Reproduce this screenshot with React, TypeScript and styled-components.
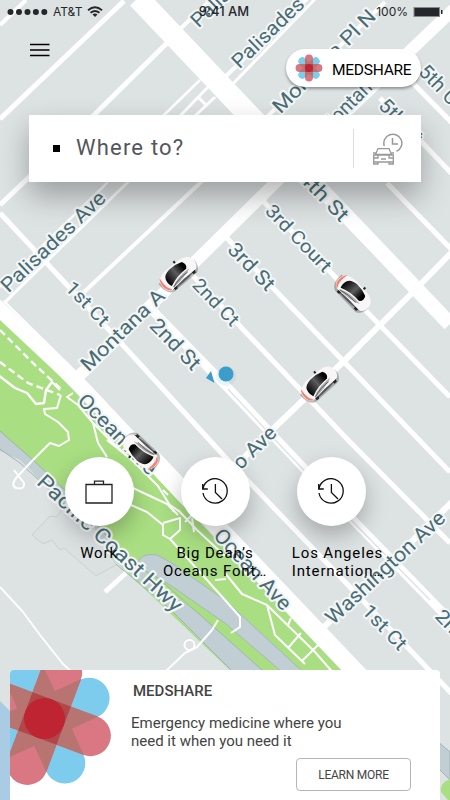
import React from "react";
import styled, { createGlobalStyle } from "styled-components";

const GlobalStyle = createGlobalStyle`
  *, *::before, *::after { box-sizing: border-box; }
  body { margin: 0; background: #dde2e2; font-family: Roboto, "Liberation Sans", sans-serif; }
  p, h2 { margin: 0; }
  button { font: inherit; color: inherit; border: 0; padding: 0; background: none; }
`;

const Screen = styled.main`
  position: relative;
  z-index: 0;
  width: 450px;
  height: 800px;
  overflow: hidden;
  display: flex;
  flex-direction: column;
  color: #000;
`;

const MapCanvas = styled.svg`
  position: absolute;
  inset: 0;
  z-index: -1;
`;

const StatusBar = styled.header`
  display: grid;
  grid-template-columns: 1fr auto 1fr;
  align-items: center;
  height: 23px;
  padding: 0 7px 0 7px;
  font: 400 12px/23px Inter, Roboto, sans-serif;
  color: #25282b;
`;

const StatusGroup = styled.div<{ $end?: boolean }>`
  display: flex;
  align-items: center;
  gap: 5px;
  justify-content: ${(p) => (p.$end ? "flex-end" : "flex-start")};
`;

const Clock = styled.span`
  font-weight: 500;
  font-size: 13px;
  padding-right: 2px;
`;

const TopRow = styled.div`
  display: flex;
  justify-content: space-between;
  padding: 20px 29px 0 30px;
  margin-top: 6px;
`;

const MenuButton = styled.button`
  display: block;
  width: 20px;
  height: 14px;
  margin-top: -7px;
`;

const BrandChip = styled.div`
  display: flex;
  align-items: center;
  gap: 9px;
  width: 135px;
  height: 38px;
  padding-left: 9px;
  border-radius: 19px;
  background: #fff;
  box-shadow: 0 2px 3px rgba(0, 0, 0, 0.35);
  font-size: 15.5px;
  line-height: 20px;
  white-space: nowrap;
`;

const ChipName = styled.span`
  margin-top: 3px;
  letter-spacing: -0.25px;
`;

const SearchBar = styled.div`
  display: flex;
  align-items: center;
  width: 392px;
  height: 67px;
  margin: 28px 0 0 29px;
  padding-left: 24px;
  background: #fff;
  box-shadow: 0 14px 30px rgba(0, 0, 0, 0.3);
`;

const Marker = styled.span`
  width: 7px;
  height: 7px;
  background: #000;
  margin-right: 16px;
`;

const SearchPrompt = styled.span`
  flex: 1;
  font-size: 22px;
  line-height: 26px;
  letter-spacing: 1.2px;
  color: #54565c;
  margin-top: -1px;
`;

const ScheduleButton = styled.button`
  display: flex;
  align-items: center;
  height: 39px;
  width: 68px;
  padding-left: 18px;
  border-left: 1px solid #dcdcdc;
`;

const Shortcuts = styled.nav`
  display: grid;
  grid-template-columns: repeat(3, 116px);
  margin: 275px 0 0 41px;
`;

const Shortcut = styled.div`
  display: flex;
  flex-direction: column;
  align-items: center;
`;

const ShortcutDisc = styled.button`
  display: flex;
  align-items: center;
  justify-content: center;
  width: 69px;
  height: 69px;
  border-radius: 50%;
  background: #fff;
  box-shadow: 0 10px 22px rgba(0, 0, 0, 0.25);
`;

const ShortcutLabel = styled.span<{ $left?: boolean }>`
  margin-top: 18px;
  margin-left: ${(p) => (p.$left ? "14px" : "0")};
  font-size: 15px;
  line-height: 18px;
  letter-spacing: 0.85px;
  white-space: pre;
  text-align: ${(p) => (p.$left ? "left" : "center")};
`;

const PromoCard = styled.section`
  display: flex;
  width: 430px;
  height: 130px;
  margin: auto 10px 0;
  border-radius: 4px 4px 0 0;
  background: #fff;
  overflow: hidden;
  color: #444;
`;

const PromoBody = styled.div`
  flex: 1;
  display: flex;
  flex-direction: column;
  padding: 12px 29px 9px 17px;
`;

const PromoTitle = styled.h2`
  font-size: 15px;
  font-weight: 500;
  line-height: 18px;
  padding-left: 2px;
`;

const PromoText = styled.p`
  margin-top: 14px;
  font-size: 15px;
  line-height: 18px;
  white-space: pre;
`;

const LearnMore = styled.button`
  align-self: flex-end;
  margin-top: auto;
  width: 115px;
  height: 33px;
  border: 1px solid #b5b5b5;
  border-radius: 4px;
  font-size: 12px;
  letter-spacing: -0.25px;
  text-align: center;
`;

type RoadProps = { d: string; w: number; color?: string; dash?: string };
const Road = ({ d, w, color = "#fff", dash }: RoadProps) => (
  <path d={d} stroke={color} strokeWidth={w} strokeDasharray={dash} fill="none" strokeLinejoin="round" />
);

type Street = { x: number; y: number; a: number; len: number; name: string; size?: number };
const streets: Street[] = [
  { x: 197, y: 27, a: -44, len: 92, name: "Palisades" },
  { x: 238, y: 68, a: -44, len: 92, name: "Palisades" },
  { x: 279, y: 113, a: -45, len: 137, name: "Montana Pl N" },
  { x: 325, y: 134, a: -45, len: 77, name: "Montana" },
  { x: 419, y: 71, a: 46, len: 54, name: "5th Ct" },
  { x: 379, y: 105, a: 46, len: 54, name: "5th St" },
  { x: 299, y: 177, a: 46, len: 62, name: "4th St", size: 20 },
  { x: 265, y: 211, a: 46, len: 86, name: "3rd Court", size: 18.5 },
  { x: 228, y: 249, a: 46, len: 58, name: "3rd St", size: 20 },
  { x: 7, y: 292, a: -43.5, len: 136, name: "Palisades Ave" },
  { x: 192, y: 285, a: 46, len: 58, name: "2nd Ct", size: 18.5 },
  { x: 150, y: 325, a: 46, len: 63, name: "2nd St", size: 20.5 },
  { x: 65, y: 288, a: 46, len: 54, name: "1st Ct", size: 18.5 },
  { x: 87, y: 371, a: -44, len: 108, name: "Montana A" },
  { x: 78, y: 400, a: 46, len: 104, name: "Ocean Ave" },
  { x: 239, y: 469, a: -44, len: 52, name: "o Ave" },
  { x: 37, y: 482, a: 43, len: 190, name: "Pacific Coast Hwy", size: 21 },
  { x: 214, y: 535, a: 47, len: 103, name: "Ocean Ave", size: 20.5 },
  { x: 332, y: 624, a: -43, len: 155, name: "Washington Ave", size: 20.5 },
  { x: 362, y: 611, a: 46, len: 55, name: "1st Ct", size: 19 },
  { x: 435, y: 616, a: 46, len: 62, name: "2nd St", size: 19 },
  { x: 350, y: 679, a: 46, len: 100, name: "Ocean Ave", size: 20 },
];

const Car = ({ x, y, a }: { x: number; y: number; a: number }) => (
  <g transform={`translate(${x} ${y}) rotate(${a})`}>
    <path d="M-22-4Q-23 9-15 12L15 12Q21 9 21 1L8-4Z" fill="#555" opacity=".4" />
    <path d="M-19-6Q-14-10-6-10L9-9.500Q17-9 20-3Q22 4 17 8Q8 10.500-7 10Q-17 11-20 5Q-22-2-19-6Z" fill="#f8f6f6" />
    <path d="M-18.500-6.500Q-22 0-19 6Q-17.500 8.500-15 9L-17.500 4Q-18.500-1-17.500-7.500Z" fill="#f4826f" />
    <path d="M-15 9.500Q0 7.500 16 8.500Q7 11-8 10.500Z" fill="#55575a" />
    <path d="M-13.500-3Q-12-7.500-4-8.300Q4-8.500 10-6Q13-1 9 2Q-3 1.500-13 6Q-15 2-13.500-3Z" fill="url(#glass)" />
    <path d="M-12.500 7.500Q-4 2.500 12 3.500Q4 7.500-12.500 8.500Z" fill="#aaaaab" />
    <path d="M-12 8Q-3 4.500 8 5.500" stroke="#555" strokeWidth=".8" fill="none" />
    <path d="M3-9.500l0-2.500 2 0 0 2.500zM-13 9h4l-1 2.500h-3zM11 8.500h4l-1 2.500h-3z" fill="#252525" />
  </g>
);

const CityMap = () => (
  <MapCanvas width="450" height="800" viewBox="0 0 450 800" aria-hidden="true">
    <defs>
      <linearGradient id="glass">
        <stop offset="0" stopColor="#050505" />
        <stop offset=".5" stopColor="#5c5c5c" />
        <stop offset=".85" stopColor="#050505" />
      </linearGradient>
    </defs>
    <rect width="450" height="800" fill="#dde2e2" />
    <path d="M0 701L12 713V800H0Z" fill="#a9cbe4" />
    <path d="M0 314L343 672H232L110 556L0 437Z" fill="#a9de82" />
    <path d="M0 432L34 461L66 491L110 540L137 566L200 615L262 670V684H243L225 664L170 609L105 550L61 500L20 460L0 451Z" fill="#c1cfd4" />
    <path d="M0 431L34 461L66 491L110 540L165 584L225 637L262 670M0 449L20 463L61 500L105 555L170 609L225 664L240 679" fill="none" stroke="#a3b2ba" strokeWidth="1" />
    <path d="M137 566Q139 552 157 555L170 562L225 600L303 672H282L225 623L167 583Z" fill="#c1cfd4" stroke="#a6b7bd" strokeWidth="1" />
    <path d="M436 740L450 752V780L436 766Z" fill="#c1cfd4" stroke="#a3b2ba" />
    <path d="M450 779Q439 783 441 792L448 800H450Z" fill="#a9de82" />

    <path d="M32 535L50 516L57 517L65 504L85 520L96 530L111 555L116 565L96 576L64 548L60 550L52 540L43 544Z" fill="#dbe0e0" stroke="#cbd0d0" />

    <Road w={4} d="M0 25L26 0" />
    <Road w={5} d="M0 119L124 1" />
    <Road w={5} d="M0 205L92 117L167 43" />
    <Road w={2.5} d="M0 287L105 185L163 116L200 80" />
    <Road w={3} d="M4 303L127 183L180 116L208 87M195 116L215 97M199 98L207 106" />
    <Road w={4} d="M180 29L215 -4M225 77L308 -2" />
    <Road w={3} d="M225 92L316 -2" />
    <Road w={4} d="M83 293L200 183L272 112L385 2" />
    <Road w={22} d="M138 -2L247 113L310 178" />
    <Road w={15} d="M300 167L450 324" />
    <Road w={12} d="M75 380L273 185L345 113L455 8" />
    <Road w={6} d="M195 506L272 430L345 360L413 292L452 252" />
    <Road w={5} d="M387 183L452 250M400 70L455 126M380 98L452 174" />
    <Road w={5} d="M262 200L340 282L368 313L450 397" />
    <Road w={5} d="M225 236L273 288L450 472" />
    <Road w={5} d="M183 265L237 323L348 440L450 543" />
    <Road w={9} d="M150 308L228 388L280 443L353 520L452 622" />
    <Road w={1.3} color="#dce2e2" d="M228 389L280 445L353 522L430 600" />
    <Road w={5} d="M0 213L67 285L110 331L225 457L348 585L452 694" />
    <Road w={6} d="M322 629L452 502" />
    <Road w={15} d="M-5 305L75 380L190 502" />
    <Road w={18} d="M150 456L353 669L374 690" />
    <Road w={2} d="M4 301L72 368M6 302L28 280" />

    <Road w={2.4} dash="7 4" d="M0 330L35 365L62 390" />
    <Road w={2.4} dash="7 4" d="M0 362L28 383L60 395" />
    <Road w={2.4} d="M-2 375L15 388L27 393L36 404L44 403L46 390L52 382L60 390" />
    <Road w={2} d="M61 395L57 408L44 409L45 414L58 422L68 432L69 440L59 446L50 443L33 460L17 477Q10 485 16 488Q25 490 24 483L14 470" />
    <Road w={2} d="M73 393L67 397L78 405L93 423L113 443L135 463L158 486L174 512M93 423L98 443L107 457M107 440L132 460" />
    <Road w={2} d="M133 488L167 504L178 515M131 505L147 512L163 525V535L170 539L180 530V518L163 523M178 510L197 530L225 556M170 539L225 600L240 617V627L231 633M225 573L242 594L267 605L315 652L335 675M267 605L275 635L305 664M288 648L301 633M302 661L318 645M192 518L194 532M185 522L192 515M215 580L226 579M241 565L297 617" />
    <Road w={2} d="M163 490L168 495M180 512L170 505M288 625L291 618" />
    <Road w={2} d="M218 620L212 630L197 647L185 653L165 672M0 587L23 612L40 635L63 664L72 672" />
    <circle cx="189.500" cy="645" r="5" stroke="#fff" strokeWidth="2" fill="none" />
    <Road w={5} d="M105 592L126 573" />

    {streets.map((s, i) => (
      <text
        key={i}
        y="-5"
        transform={`translate(${s.x} ${s.y}) rotate(${s.a})`}
        fontFamily="Roboto, sans-serif"
        fontSize={s.size ?? 20}
        textLength={s.len}
        lengthAdjust="spacingAndGlyphs"
        dominantBaseline="central"
        fill="#496b74"
        stroke="#f3f6f6"
        strokeWidth="4"
        strokeLinejoin="round"
        paintOrder="stroke"
      >
        {s.name}
      </text>
    ))}

    <circle cx="226" cy="376" r="10" fill="#5bb3dd" opacity=".14" />
    <circle cx="226" cy="374" r="7.500" fill="#3c9dca" />
    <path d="M211 371L214.500 383L206 378Z" fill="#3c9dca" />
    <Car x={178} y={273} a={-40} />
    <Car x={319} y={383} a={-42} />
    <Car x={354} y={293} a={46} />
    <Car x={140} y={452} a={224} />
  </MapCanvas>
);

const MenuIcon = () => (
  <svg width="20" height="14" viewBox="0 0 20 14">
    <path d="M0 1.500H19.500M0 7H19.500M0 12.500H19.500" stroke="#000" strokeWidth="1.700" />
  </svg>
);

const Capsule = ({ angle }: { angle: number }) => (
  <rect x="-69.500" y="-20.500" width="139" height="41" rx="20.500" transform={`rotate(${angle})`} />
);

/* Two blue and two red capsules crossing at the origin. The darker brown
   reaches from the core to each point where a blue edge leaves a red arm. */
const PetalMark = ({ id }: { id: string }) => (
  <>
    <defs>
      <clipPath id={`${id}-blue`}>
        <rect x="-69.500" y="-20.500" width="139" height="41" rx="20.500" transform="rotate(-24.500)" />
        <rect x="-69.500" y="-20.500" width="139" height="41" rx="20.500" transform="rotate(65.500)" />
      </clipPath>
      <clipPath id={`${id}-red`}>
        <rect x="-69.500" y="-20.500" width="139" height="41" rx="20.500" transform="rotate(20.500)" />
      </clipPath>
    </defs>
    <g fill="#7dcced"><Capsule angle={-24.5} /><Capsule angle={65.5} /></g>
    <g fill="#d97783"><Capsule angle={20.5} /><Capsule angle={110.5} /></g>
    <g fill="#b87471" clipPath={`url(#${id}-blue)`}><Capsule angle={20.5} /><Capsule angle={110.5} /></g>
    <g transform="rotate(20.500)">
      {[0, 90, 180, 270].map((turn) => (
        <path key={turn} d="M20.500-8.500L49-20.500L20.500 8.500ZM20.500 8.500L49 20.500L20.500-8.500Z" fill="#b87471" transform={`rotate(${turn})`} />
      ))}
    </g>
    <g fill="#b0484a" clipPath={`url(#${id}-red)`}><Capsule angle={110.5} /></g>
    <circle r="20.500" fill="#be2431" />
  </>
);

const Petals = () => (
  <svg width="104" height="130" viewBox="0 0 104 130">
    <g transform="translate(34.500 48.500)"><PetalMark id="card" /></g>
  </svg>
);

const ChipMark = () => (
  <svg width="28" height="28" viewBox="-14 -14 28 28">
    <g transform="rotate(-20.500) scale(.193)"><PetalMark id="chip" /></g>
  </svg>
);

const ScheduleIcon = () => (
  <svg width="32" height="32" viewBox="0 0 32 32" fill="none" stroke="#999" strokeWidth="1.300">
    <path d="M12.300 13A9 9 0 1 1 24.500 18.400" strokeWidth="1.500" />
    <path d="M20.500 5V11H26" strokeWidth="1.500" />
    <path d="M3.500 21.500L6 15.600H17L19.500 21.500ZM1 20H3.500M19.500 20H22M1.700 22H21.300V29H1.700ZM1.700 29V31H6V29M17 29V31H21.300V29M2 25H6V22M21 25H17V22M9 26H14" />
  </svg>
);

const BriefcaseIcon = () => (
  <svg width="28" height="24" viewBox="0 0 28 24" fill="none" stroke="#222" strokeWidth="1.300">
    <path d="M1 4.500H27V23H1ZM9.500 4.500V1.200H18.500V4.500" />
  </svg>
);

const HistoryIcon = () => (
  <svg width="28" height="28" viewBox="0 0 28 28" fill="none" stroke="#111" strokeWidth="1.300">
    <path d="M2 10.800A12.200 12.200 0 1 1 2 15M1.700 6V11H6.800M14.400 6V14.500L21 21" />
  </svg>
);

const WifiIcon = () => (
  <svg width="16" height="12" viewBox="0 0 16 12" fill="none" stroke="#25282b" strokeWidth="1.800">
    <path d="M1 4.200Q8-1.800 15 4.200M3.500 6.800Q8 3.200 12.500 6.800" />
    <path d="M5.500 8.400Q8 6.500 10.500 8.400L8 11Z" fill="#25282b" stroke="none" />
  </svg>
);

const SignalDots = () => (
  <svg width="41" height="8" viewBox="0 0 41 8" fill="#25282b">
    {[3.5, 12, 20.5, 28.9, 37.3].map((x) => <circle key={x} cx={x} cy="4" r="3" />)}
  </svg>
);

const BatteryIcon = () => (
  <svg width="30" height="12" viewBox="0 0 30 12" fill="#25282b">
    <rect x=".5" y="1" width="26.500" height="10" fill="#888b8c" />
    <rect x="1.500" y="2" width="24.500" height="8" />
    <rect x="28" y="4" width="1.500" height="4" />
  </svg>
);

const shortcuts = [
  { label: "Work", icon: <BriefcaseIcon /> },
  { label: "Big Dean’s\nOceans Font…", icon: <HistoryIcon /> },
  { label: "Los Angeles\nInternation…", icon: <HistoryIcon />, left: true },
];

export default function App() {
  return (
    <>
      <GlobalStyle />
      <Screen>
        <CityMap />
        <StatusBar>
          <StatusGroup><SignalDots />AT&amp;T<WifiIcon /></StatusGroup>
          <Clock>9:41 AM</Clock>
          <StatusGroup $end>100%<BatteryIcon /></StatusGroup>
        </StatusBar>
        <TopRow>
          <MenuButton aria-label="Menu"><MenuIcon /></MenuButton>
          <BrandChip><ChipMark /><ChipName>MEDSHARE</ChipName></BrandChip>
        </TopRow>
        <SearchBar>
          <Marker />
          <SearchPrompt>Where to?</SearchPrompt>
          <ScheduleButton aria-label="Schedule a ride"><ScheduleIcon /></ScheduleButton>
        </SearchBar>
        <Shortcuts>
          {shortcuts.map((s) => (
            <Shortcut key={s.label}>
              <ShortcutDisc aria-label={s.label}>{s.icon}</ShortcutDisc>
              <ShortcutLabel $left={s.left}>{s.label}</ShortcutLabel>
            </Shortcut>
          ))}
        </Shortcuts>
        <PromoCard>
          <Petals />
          <PromoBody>
            <PromoTitle>MEDSHARE</PromoTitle>
            <PromoText>{"Emergency medicine where you\nneed it when you need it"}</PromoText>
            <LearnMore>LEARN MORE</LearnMore>
          </PromoBody>
        </PromoCard>
      </Screen>
    </>
  );
}
